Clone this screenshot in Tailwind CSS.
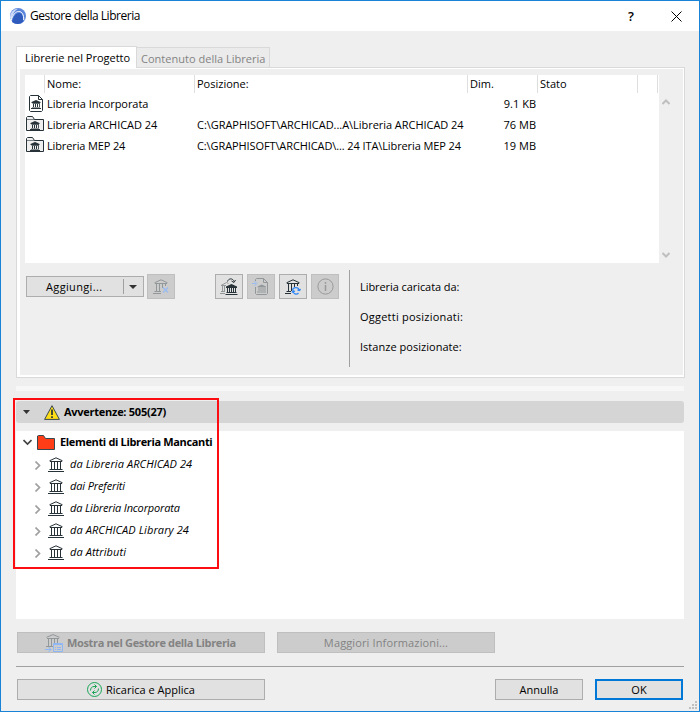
<!DOCTYPE html>
<html lang="it">
<head>
<meta charset="utf-8">
<title>Gestore della Libreria</title>
<script src="https://cdn.jsdelivr.net/npm/@tailwindcss/browser@4"></script>
</head>
<body class="h-[712px] w-[700px] overflow-hidden font-['Open_Sans','Noto_Sans',sans-serif] text-[11px] leading-4 text-black">
<svg class="hidden">
  <defs>
    <symbol id="temple" viewBox="0 0 16 15"><path fill="none" stroke="currentColor" d="M1.500 3.800 8 .8l6.500 3M2 4.500h12M3.500 5v7M6.500 5v7M9.500 5v7M12.500 5v7M1.500 12.500h13M0 14.500h16"/></symbol>
    <symbol id="minitemple" viewBox="0 0 10 9"><path fill="currentColor" d="M5 0l4.500 2v1H.5V2zM2 4h1v3H2zM4 4h1v3H4zM6 4h1v3H6zM8 3h.8v4H8zM1 7h8v.6H1zM0 8h10v1H0zM1.500 3h7v.7h-7z"/></symbol>
    <symbol id="folder" viewBox="0 0 18 16"><path fill="#efefef" stroke="#263238" d="M.5 14.500V1.500L1.500.5h5l2 3h9v11z"/><path fill="none" stroke="#263238" stroke-opacity=".6" d="M1 3.500h8"/></symbol>
  </defs>
</svg>
<div class="relative flex h-[712px] w-[700px] flex-col border border-[#1883d7] bg-[#efefef]">
  <header class="flex h-[30px] items-center bg-white pl-[9px]">
    <svg class="mr-[4px] h-4 w-4" viewBox="0 0 16 16"><circle cx="8" cy="8" r="8" fill="#5b86da"/><path fill="#c9d9f7" d="M0 10C0 5 3 1 8 .8c-3 1.700-5 4.500-6.500 11z"/><path fill="#2f5bbd" d="M2 14C3.500 8 6 5 9 5s4.500 3.500 4 8.500C10 17 5 16.500 2 14z"/><path fill="none" stroke="#fff" d="M1 12.500C3 6.500 5.500 3.500 8.700 3.500s5.300 3 5 8.500"/></svg>
    <h1 class="w-[586px] text-[12px] tracking-[-0.47px] whitespace-nowrap">Gestore della Libreria</h1>
    <span class="w-[55px] pl-[12px] text-[13px] font-semibold">?</span>
    <svg class="h-[11px] w-[11px]" viewBox="0 0 11 11"><path d="m.5.500 10 10m0-10-10 10" stroke="#000" fill="none"/></svg>
  </header>

  <nav class="z-10 mt-[15px] ml-[15px] flex h-[22px] items-end">
    <span class="flex h-[22px] w-[121px] items-center border border-b-0 border-[#d9d9d9] bg-white pl-2 whitespace-nowrap">Librerie nel Progetto</span>
    <span class="mb-[1px] flex h-[20px] w-[133px] items-center border border-l-0 border-b-0 border-[#d9d9d9] bg-[#ebebeb] pt-[2px] pl-[4px] tracking-[0.02px] whitespace-nowrap text-[#838383]">Contenuto della Libreria</span>
  </nav>
  <section class="-mt-px ml-[15px] h-[311px] w-[669px] border border-[#d9d9d9] bg-white pt-px pr-px pb-[2px] pl-[3px]">
    <div class="h-full bg-[#efefef] pt-[6px] pl-[5px]">
      <div class="flex h-[188px]">
        <div class="w-[634px] bg-white">
          <div class="flex h-[18px] items-center [&>span]:h-[18px] [&>span]:border-r [&>span]:border-[#dedede] [&>span]:pt-px [&>span]:pl-[2px]">
            <span class="w-5"></span><span class="w-[150px]">Nome:</span><span class="w-[273px]">Posizione:</span><span class="w-[70px]">Dim.</span><span class="w-[100px]">Stato</span><span class="w-[20px]"></span>
          </div>
          <div class="flex h-[21px] items-center whitespace-nowrap">
            <div class="relative h-[18px] w-[22px]"><svg class="absolute top-0 left-[4px] h-[17px] w-[14px]" viewBox="0 0 14 17"><path fill="#fff" stroke="#263238" d="M.5 1.500 1.500.5h8l4 4v11l-1 1h-11l-1-1zM9.500.5v4h4"/></svg><svg class="absolute top-[5px] left-[6px] h-[9px] w-[10px] text-[#263238]"><use href="#minitemple"/></svg></div>
            <span class="w-[150px] tracking-[-0.05px]">Libreria Incorporata</span><span class="w-[273px]"></span><span class="w-[66px] text-right">9.1 KB</span>
          </div>
          <div class="flex h-[21px] items-center whitespace-nowrap">
            <div class="relative h-[18px] w-[22px]"><svg class="absolute top-0 left-px h-4 w-[18px]"><use href="#folder"/></svg><svg class="absolute top-[5px] left-[5px] h-[9px] w-[10px] text-[#263238]"><use href="#minitemple"/></svg></div>
            <span class="w-[150px] tracking-[-0.06px]">Libreria ARCHICAD 24</span><span class="w-[273px] tracking-[-0.04px]">C:\GRAPHISOFT\ARCHICAD...A\Libreria ARCHICAD 24</span><span class="w-[66px] text-right">76 MB</span>
          </div>
          <div class="flex h-[21px] items-center whitespace-nowrap">
            <div class="relative h-[18px] w-[22px]"><svg class="absolute top-0 left-px h-4 w-[18px]"><use href="#folder"/></svg><svg class="absolute top-[5px] left-[5px] h-[9px] w-[10px] text-[#263238]"><use href="#minitemple"/></svg></div>
            <span class="w-[150px] tracking-[-0.13px]">Libreria MEP 24</span><span class="w-[273px] tracking-[-0.1px]">C:\GRAPHISOFT\ARCHICAD\... 24 ITA\Libreria MEP 24</span><span class="w-[66px] text-right">19 MB</span>
          </div>
        </div>
        <div class="flex flex-col justify-between pt-[24px] pb-[5px] pl-[3px]">
          <svg class="h-[6px] w-[8px]" viewBox="0 0 8 6"><path d="m.5 5 3.500-3.500L7.500 5" fill="none" stroke="#bfbfbf" stroke-width="2"/></svg>
          <svg class="h-[6px] w-[8px]" viewBox="0 0 8 6"><path d="m.5 1 3.500 3.500L7.500 1" fill="none" stroke="#bfbfbf" stroke-width="2"/></svg>
        </div>
      </div>
      <div class="mt-[7px] flex h-[97px]">
        <div class="mt-[4px] ml-px flex h-[25px] items-center">
          <div class="flex h-[21px] w-[118px] items-center border border-[#adadad] bg-[#e1e1e1]">
            <span class="w-[96px] pl-[19px] tracking-[0.35px]">Aggiungi...</span><i class="h-[15px] w-px bg-[#a0a0a0]"></i><svg class="ml-[5px] h-[4px] w-[8px]" viewBox="0 0 8 4"><path fill="#333" d="M0 0h8L4 4z"/></svg>
          </div>
          <div class="ml-[3px] flex h-[25px] w-7 items-center justify-center border border-[#bfbfbf] bg-[#ccc]"><svg class="h-4 w-4" viewBox="0 0 16 16"><path fill="none" stroke="#92979a" d="M1.500 3.800 8 .8l6.500 3M2 4.500h12M3.500 5v7M6.500 5v7M9.500 5v4M12.500 5v2M1.500 12.500H8M0 14.500h8"/><path d="m10 8.500 5 5m0-5-5 5" stroke="#9bbcf0" stroke-width="1.500"/></svg></div>
          <div class="ml-[40px] flex h-[25px] w-7 items-center justify-center border border-[#adadad] bg-[#e1e1e1]"><svg class="h-[18px] w-[18px]" viewBox="0 0 18 18"><path fill="none" stroke="#92979a" d="M1 7.500 6.500 4.500l2 1M1 7.500h5M2.500 8v6M4.500 8v6M1 13.500h4M0 15.500h5"/><path fill="#263238" d="m11.500 6 5.500 2.500V10H6V8.500z"/><path fill="none" stroke="#263238" d="M7.500 10v5M9.500 10v5M11.500 10v5M13.500 10v5M15.500 10v5M6.500 14.500h10M5.500 16.500h12M7.500 3.500c1-3.500 5.500-3.500 6.500 0M11.500 3l2.500 1.500L15.500 2"/></svg></div>
          <div class="ml-1 flex h-[25px] w-7 items-center justify-center border border-[#bfbfbf] bg-[#ccc]"><svg class="h-[18px] w-[18px]" viewBox="0 0 18 18"><path fill="none" stroke="#92979a" d="M3.500 3V1.500l1-1h7l4 4v11l-1 1h-10l-1-1V9M11.500.5v4h4"/><path fill="#92979a" d="m9.700 6.500 4.300 2v1H5.500v-1zM6.500 10h1v3h-1zM8.500 10h1v3h-1zM10.500 10h1v3h-1zM12.500 10h1v3h-1zM5 13.500h9v1H5z"/><path fill="none" stroke="#9bbcf0" d="M-1 5.500h5M2.500 3 5 5.500 2.500 8"/></svg></div>
          <div class="ml-1 flex h-[25px] w-7 items-center justify-center border border-[#adadad] bg-[#e1e1e1]"><svg class="h-4 w-4" viewBox="0 0 16 16"><path fill="none" stroke="#263238" d="M1.500 3.800 8 .8l6.500 3M2 4.500h12M3.500 5v7M6.500 5v7M9.500 5v3M12.500 5v2M1.500 12.500H6M0 14.500h6"/><path fill="none" stroke="#2f86f6" stroke-width="1.300" d="M7.500 11C8 8.500 13 7 14.500 11.500M15.500 10l-1 1.500-2-.5M7 13.500l1-2 2 1M8 12c0 3 3.500 4 5.500 2"/></svg></div>
          <div class="ml-1 flex h-[25px] w-7 items-center justify-center border border-[#bfbfbf] bg-[#ccc]"><svg class="h-[17px] w-[17px]" viewBox="0 0 17 17"><circle cx="8.500" cy="8.500" r="7.600" fill="none" stroke="#999"/><path stroke="#999" stroke-width="1.500" d="M8.500 4v1.700M8.500 7v6"/></svg></div>
        </div>
        <div class="ml-[10px] flex flex-col gap-[14px] border-l border-[#a0a0a0] pt-[9px] pl-[10px] whitespace-nowrap"><p class="tracking-[-0.07px]">Libreria caricata da:</p><p class="tracking-[0.23px]">Oggetti posizionati:</p><p class="tracking-[0.03px]">Istanze posizionate:</p></div>
      </div>
    </div>
  </section>

  <div class="mt-[8px] ml-[15px] h-[5px] w-[668px] bg-[#f7f7f7]"></div>
  <section class="mt-[10px] ml-[15px] flex h-[22px] w-[668px] items-center rounded-[3px] bg-[#d5d5d5] pl-[7px]">
    <svg class="h-1 w-[7px]" viewBox="0 0 7 4"><path fill="#333" d="M0 0h7L3.500 4z"/></svg>
    <svg class="ml-[14px] h-[15px] w-4" viewBox="0 0 16 15"><path fill="#ffde17" stroke="#37474f" stroke-linejoin="round" d="M8 .7 15.400 14.400H.6z"/><path stroke="#263238" stroke-width="1.700" d="M8 4.500V10M8 11.300V13"/></svg>
    <h2 class="ml-[4px] font-bold tracking-[-0.26px] whitespace-nowrap">Avvertenze: 505(27)</h2>
  </section>
  <section class="mt-2 ml-[15px] h-[188px] w-[668px] bg-white whitespace-nowrap">
    <div class="flex h-[22px] items-center pl-[7px]"><svg class="h-[7px] w-[9px]" viewBox="0 0 9 7"><path d="m.5 1 4 4 4-4" fill="none" stroke="#444" stroke-width="1.700"/></svg><svg class="ml-[5px] h-[15px] w-[18px]" viewBox="0 0 18 15"><path fill="#ff3d17" stroke="#37474f" d="M.5 14.500V1L1.500.5h5l2 3h9v11z"/></svg><b class="ml-[5px] tracking-[-0.35px]">Elementi di Libreria Mancanti</b></div>
    <div class="flex h-[22px] items-center pl-[19px] italic"><svg class="mt-[2px] h-[9px] w-[6px]" viewBox="0 0 6 9"><path d="m.5.5 4 4-4 4" fill="none" stroke="#a0a0a0" stroke-width="1.700"/></svg><svg class="ml-[7px] h-[15px] w-4 text-[#263238]"><use href="#temple"/></svg><span class="ml-[6px] tracking-[0.09px]">da Libreria ARCHICAD 24</span></div>
    <div class="flex h-[22px] items-center pl-[19px] italic"><svg class="mt-[2px] h-[9px] w-[6px]" viewBox="0 0 6 9"><path d="m.5.5 4 4-4 4" fill="none" stroke="#a0a0a0" stroke-width="1.700"/></svg><svg class="ml-[7px] h-[15px] w-4 text-[#263238]"><use href="#temple"/></svg><span class="ml-[6px] tracking-[-0.13px]">dai Preferiti</span></div>
    <div class="flex h-[22px] items-center pl-[19px] italic"><svg class="mt-[2px] h-[9px] w-[6px]" viewBox="0 0 6 9"><path d="m.5.5 4 4-4 4" fill="none" stroke="#a0a0a0" stroke-width="1.700"/></svg><svg class="ml-[7px] h-[15px] w-4 text-[#263238]"><use href="#temple"/></svg><span class="ml-[6px] tracking-[-0.17px]">da Libreria Incorporata</span></div>
    <div class="flex h-[22px] items-center pl-[19px] italic"><svg class="mt-[2px] h-[9px] w-[6px]" viewBox="0 0 6 9"><path d="m.5.5 4 4-4 4" fill="none" stroke="#a0a0a0" stroke-width="1.700"/></svg><svg class="ml-[7px] h-[15px] w-4 text-[#263238]"><use href="#temple"/></svg><span class="ml-[6px] tracking-[0.09px]">da ARCHICAD Library 24</span></div>
    <div class="flex h-[22px] items-center pl-[19px] italic"><svg class="mt-[2px] h-[9px] w-[6px]" viewBox="0 0 6 9"><path d="m.5.5 4 4-4 4" fill="none" stroke="#a0a0a0" stroke-width="1.700"/></svg><svg class="ml-[7px] h-[15px] w-4 text-[#263238]"><use href="#temple"/></svg><span class="ml-[6px] tracking-[0.08px]">da Attributi</span></div>
  </section>

  <div class="mt-[13px] ml-4 flex gap-3">
    <button class="flex h-[21px] w-[248px] items-center border border-[#bfbfbf] bg-[#ccc] pl-[27px] font-bold tracking-[-0.35px] whitespace-nowrap text-[#838383]">
      <svg class="mr-[4px] h-[18px] w-[18px]" viewBox="0 0 18 18"><path fill="none" stroke="#92979a" d="M1.500 3.300 8 .6l6.500 2.700M2 4.500h12M3.500 5v7M6.500 5v7M9.500 5v5M12.500 5v4M1 12.500h7"/><path fill="#ccc" stroke="#8fb7f5" d="M8.500 9.500h9v8h-9z"/><path fill="none" stroke="#8fb7f5" d="M8 10.500h10M10 13.500h1M12 13.500h4M10 15.500h1M12 15.500h4M0 15.500h6M3.500 13 6 15.500 3.500 18"/></svg>Mostra nel Gestore della Libreria</button>
    <button class="h-[21px] w-[218px] border border-[#bfbfbf] bg-[#ccc] leading-[19px] tracking-[0.13px] text-[#838383]">Maggiori Informazioni...</button>
  </div>
  <div class="mt-[13px] ml-[15px] h-px w-[668px] bg-[#a0a0a0]"></div>
  <footer class="mt-[12px] ml-4 flex">
    <button class="flex h-[21px] w-[248px] items-center border border-[#adadad] bg-[#e1e1e1] pl-[69px]">
      <svg class="mr-[4px] h-[15px] w-[15px]" viewBox="0 0 15 15" fill="none" stroke="#18a558"><circle cx="7.500" cy="7.500" r="7"/><path d="M3.500 8.500C3.500 6 5 4.500 7 4.500h2.500M7.500 2.500l2 2-2 2M11.500 6.500c0 2.500-1.500 4-3.500 4H5.500M7.500 8.500l-2 2 2 2"/></svg>Ricarica e Applica</button>
    <button class="ml-[230px] h-[21px] w-[88px] border border-[#adadad] bg-[#e1e1e1] leading-[19px]">Annulla</button>
    <button class="ml-[12px] h-[21px] w-[88px] border-2 border-[#0078d7] bg-[#e1e1e1] leading-[17px]">OK</button>
  </footer>

  <div class="absolute top-[397px] left-[12px] h-[171px] w-[206px] border-2 border-[#fb0d12]"></div>
  <svg class="absolute right-[2px] bottom-[2px] h-2 w-2" viewBox="0 0 8 8"><path fill="#bfbfbf" d="M6 0h2v2H6zM3 3h2v2H3zM6 3h2v2H6zM0 6h2v2H0zM3 6h2v2H3zM6 6h2v2H6z"/></svg>
</div>
</body>
</html>
